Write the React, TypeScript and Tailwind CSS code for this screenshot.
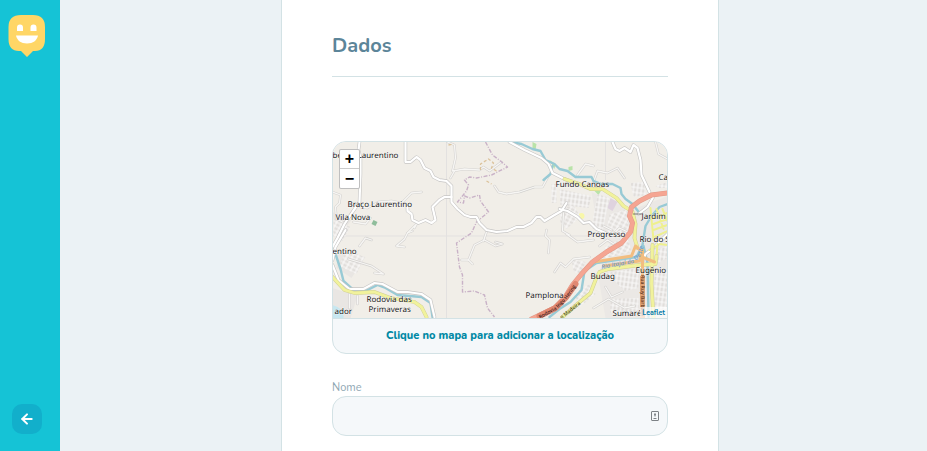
import { FiArrowLeft } from "react-icons/fi";

const whiteRoads = [
  "M360 142 L359 150 L361 158 L361 174 L360 202 L353 212 L345 224 L338 238 L333 247",
  "M406 142 L406 162 L411 162 L417 157 L421 160 L425 168 L431 171 L434 177 L440 180 L447 181 L452 186 L452 202 L458 209 L465 215 L471 217 L477 217 L480 223 L487 230 L497 232 L508 231 L517 227 L524 227 L532 223 L537 217 L541 217 L545 221 L555 215 L562 211 L567 203",
  "M408 207 L408 211 L412 214 L413 220 L419 223 L426 220 L432 223 L436 220 L433 207 L440 200 L445 197 L452 197",
  "M510 142 L525 150 L542 158 L549 164 L553 173 L563 178 L574 183",
  "M613 142 L616 149 L620 151 L625 148 L631 152 L634 145 L638 148 L641 160 L642 175 L650 192",
  "M333 265 L339 280 L350 289 L364 289 L375 283 L383 284 L398 292 L408 292 L422 294 L431 300 L435 317",
  "M346 230 L336 247 L333 260",
  "M560 209 L568 211 L578 217 L584 223 L590 222 L597 229 L606 233",
  "M641 267 L646 254 L655 247 L668 234",
  "M655 195 L648 207 L639 214",
];

const faintRoads = [
  "M422 192 L412 193 L402 203 L392 201 L379 202 L368 208 L361 207",
  "M448 142 L455 145 L456 158 L453 171 L465 169 L480 170 L484 167 L490 171 L502 162",
  "M455 171 L451 178",
  "M495 186 L499 192 L507 194 L520 192 L535 187 L543 187 L549 176",
  "M405 247 L397 246 L405 239 L408 233 L413 231",
  "M496 242 L503 244 L496 246 L485 240 L475 245 L469 260 L473 264",
  "M469 260 L462 260",
  "M484 241 L487 232",
  "M547 230 L546 236 L550 240 L549 253",
  "M555 272 L561 263 L566 267 L574 259 L590 257",
  "M349 259 L372 266 L384 274 L375 273",
  "M360 246 L366 238 L372 240",
  "M656 142 L659 154 L668 159",
  "M594 182 L598 171 L608 173 L618 168 L625 178",
  "M578 175 L586 164 L594 166",
  "M564 213 L563 231 L570 235",
  "M567 234 L578 242 L594 240",
  "M333 192 L341 195 L340 203 L336 207 L337 219 L345 223",
  "M408 233 L417 224 L415 228",
  "M594 308 L609 299 L625 308 L635 306",
  "M606 287 L612 297 L623 292",
  "M600 246 L608 240 L616 245 M612 236 L620 228 L628 232 M604 226 L612 230",
  "M354 222 L366 224 L371 218",
  "M350 294 L350 308 M358 296 L358 304",
];

const steepBlocks = [
  "M334 219 l17 8 l-8 14 l-9 -5 Z",
  "M347 250 l18 7 l-8 17 l-18 -8 Z",
  "M560 209 l14 -4 l7 12 l-14 12 l-6 -6 Z",
  "M572 259 l14 3 l-3 12 l-9 -2 Z",
  "M575 293 l15 -9 l6 10 l-17 14 Z",
  "M610 214 l18 -5 l1 24 l-13 5 l-9 -8 Z",
  "M606 246 l22 -10 l4 16 l-30 7 Z",
];

const uprightBlocks = [
  "M598 194 l12 4 l-7 34 l-11 -4 l3 -18 Z",
  "M560 189 l32 7 l-3 12 l-28 -3 Z",
  "M631 183 l13 -1 l3 13 l-13 2 Z",
  "M611 299 l28 -1 l0 15 l-28 0 Z",
  "M655 274 l13 -2 l0 37 l-13 0 Z",
  "M606 273 l33 -5 l0 20 l-14 3 l-10 -10 Z",
  "M552 184 l5 0 l0 19 l-5 0 Z",
  "M656 250 l12 -4 l0 12 l-12 6 Z",
  "M660 188 l8 0 l0 -6 l-12 4 Z",
];

const rivers = [
  "M512 142 L522 144 L533 149 L541 151 L546 160 L555 164 L560 169 L568 171 L576 177 L592 177 L594 181 L602 184 L613 184 L621 188 L622 194 L626 199 L633 204 L640 213",
  "M553 166 L551 174 L544 180",
  "M668 204 L660 207 L652 216 L646 226 L643 245 L637 257 L617 260 L597 263 L585 271 L582 290 L571 302 L560 309 L550 317",
  "M644 246 L648 263 L649 317",
  "M336 254 L341 269 L344 281 L355 291 L366 291 L378 285 L386 288 L398 295 L422 297 L431 303 L433 317",
];

const yellowRoads = [
  "M565 179 L580 184 L591 189 L603 189 L617 198 L624 206 L632 211",
  "M333 277 L345 290 L355 293 L375 292 L391 298 L415 302 L422 307 L427 317",
  "M563 317 L579 303 L591 293 L596 280 L600 272 L609 269 L640 265 L656 264 L657 256",
  "M653 245 L652 284 L654 317",
  "M633 212 L636 224 L635 238 L638 248",
];

const localYellow = [
  "M651 208 L654 240 M654 218 L668 213 M654 224 L668 219 M654 230 L668 225 M655 237 L668 231 M657 209 L664 229 M663 209 L668 221",
  "M650 250 L660 244 L668 245 M657 257 L658 244",
];

const mainRoad =
  "M668 193 L652 195 L640 201 L632 207 L630 216 L633 223 L631 232 L622 243 L607 252 L593 262 L582 274 L573 285 L565 298 L555 308 L532 319";

const places: [string, number, number][] = [
  ["be", 333, 158],
  ["Laurentino", 358, 158],
  ["Braço Laurentino", 348, 207],
  ["Vila Nova", 336, 220],
  ["Fundo Canoas", 556, 187],
  ["Ca", 659, 180],
  ["Jardim", 642, 219],
  ["Progresso", 588, 237],
  ["Rio do S", 640, 242],
  ["entino", 333, 254],
  ["Budag", 591, 279],
  ["Eugênio", 636, 273],
  ["Pamplona", 526, 298],
  ["Rodovia das", 367, 302],
  ["Primaveras", 369, 312],
  ["ador", 335, 314],
  ["Sumaré", 613, 316],
];

function Lines({ paths, color, width }: { paths: string[]; color: string; width: number }) {
  return (
    <g stroke={color} strokeWidth={width}>
      {paths.map((d) => (
        <path key={d} d={d} />
      ))}
    </g>
  );
}

function MapDrawing() {
  return (
    <svg
      viewBox="333 142 335 176"
      preserveAspectRatio="xMidYMid slice"
      className="block h-full w-full"
      role="img"
      aria-label="Mapa"
    >
      <defs>
        <pattern id="steep" width="5" height="4" patternUnits="userSpaceOnUse" patternTransform="rotate(28)">
          <rect width="5" height="4" fill="#e2dfdc" />
          <path d="M0 2H5M2 0V4" stroke="#fbfaf9" strokeWidth="1.2" />
        </pattern>
        <pattern id="upright" width="4" height="5" patternUnits="userSpaceOnUse" patternTransform="rotate(8)">
          <rect width="4" height="5" fill="#e1dedb" />
          <path d="M0 2H4M2 0V5" stroke="#fbfaf9" strokeWidth="1.2" />
        </pattern>
        <path id="rodovia" d="M540 318 L556 309 L567 298 L579 281" />
        <path id="madeira" d="M562 319 L570 313 L585 301" />
        <path id="rio" d="M602 267 L634 261 L640 254 L645 236" />
        <path id="ruy" d="M642 275 L642 317" />
      </defs>
      <rect x="333" y="142" width="335" height="176" fill="#f1eee8" />
      <path d="M592 192 L632 210 L668 196 V318 H606 L598 272 L618 248 L600 238Z" fill="#ebe8e5" />
      <path d="M333 212 L352 220 L337 240Z M338 250 L366 257 L352 278 L337 268Z M333 288 L358 296 L351 318 H333Z" fill="#e9e6e3" />
      <path d="M447 142V318M606 142V180M333 236H600" stroke="#e3e1e0" strokeWidth="1" />
      <path d="M333 305 q12 3 11 13 h-11z" fill="#c7e7f0" />
      <g fill="#b9e3a9">
        <path d="M374 220l4 2-2 4-4-2z" fill="#8fbd9b" />
        <path d="M533 142l4 2-1 6-3-2zM550 160l6 4-1 5zM569 167l4-1 0 4-4 1zM601 212l3 1-3 14-3-1zM593 189l9 1-3 5z" />
      </g>
      <circle cx="582" cy="216" r="3" fill="#f8f7a8" />
      <path d="M611 198l7 4-5 9-5-3z" fill="#dfd3df" />
      {steepBlocks.map((d) => (
        <path key={d} d={d} fill="url(#steep)" />
      ))}
      {uprightBlocks.map((d) => (
        <path key={d} d={d} fill="url(#upright)" />
      ))}
      <g fill="none" strokeLinejoin="round" strokeLinecap="round">
        <Lines paths={faintRoads} color="#d3d1cf" width={2.4} />
        <Lines paths={faintRoads} color="#f7f6f4" width={1.3} />
        <g stroke="#c9b2c7" strokeWidth="1.4" strokeDasharray="4 1.5 1 1.5" strokeLinecap="butt">
          <path d="M486 142 L493 155 L501 161 L508 167 L492 175 L477 178 L470 177 L465 180 L469 185 L467 191 L458 202 L464 203 L465 196 L470 198 L480 195 L481 201 L489 212 L477 222 L472 233 L457 243 L460 267 L463 275 L463 292 L475 291 L485 295 L488 308 L495 317" />
        </g>
        <path
          d="M481 170 L481 164 L489 159 L494 163 L492 168 L497 171 M487 181 L492 184 M449 145 L454 144"
          stroke="#dcc39c"
          strokeWidth="1.3"
          strokeDasharray="3 2"
          strokeLinecap="butt"
        />
        <Lines paths={rivers} color="#98cad5" width={2.4} />
        <Lines paths={whiteRoads} color="#c6c5c4" width={3.4} />
        <Lines paths={whiteRoads} color="#fff" width={2.2} />
        <Lines paths={localYellow} color="#eef08f" width={2} />
        <Lines paths={yellowRoads} color="#d0cf94" width={3.8} />
        <Lines paths={yellowRoads} color="#f1f29c" width={2.8} />
        <path
          d="M594 262 L632 256 L636 246 L643 252 M604 266 L640 261 L643 252 M640 256 L655 262 M643 250 V318"
          stroke="#f2bd80"
          strokeWidth="3"
        />
        <path d="M643 276 V318" stroke="#dfa375" strokeWidth="5" strokeLinecap="butt" />
        <path d={mainRoad} stroke="#e09a89" strokeWidth="5" />
        <path d={mainRoad} stroke="#f5a592" strokeWidth="4" />
        <path d="M540 316 L556 308 L566 298 L576 284" stroke="#e08872" strokeWidth="6" />
        <path d="M634 214H643" stroke="#555" strokeWidth=".8" />
      </g>
      <g fontFamily="'Open Sans', 'Noto Sans', sans-serif" fontWeight="600" textRendering="geometricPrecision">
        <text fontSize="5" fill="#3f211d" dy="1">
          <textPath href="#rodovia">Rodovia Ingo Hering</textPath>
        </text>
        <text fontSize="5" fill="#4a4a28">
          <textPath href="#madeira">o Madeira</textPath>
        </text>
        <text fontSize="6" fill="#6c9fd0" fontStyle="italic" dy="2">
          <textPath href="#rio">Rio Itajaí do Oeste</textPath>
        </text>
        <text fontSize="5" fill="#5b3420" dy="1">
          <textPath href="#ruy">Rua Ruy Barbosa</textPath>
        </text>
      </g>
      <g
        fontFamily="'Noto Sans', 'Open Sans', sans-serif"
        fontSize="8"
        fill="#222"
        stroke="#fff"
        strokeOpacity="0.5"
        strokeWidth="1"
        paintOrder="stroke"
        textRendering="geometricPrecision"
      >
        {places.map(([name, x, y]) => (
          <text key={name} x={x} y={y}>
            {name}
          </text>
        ))}
      </g>
    </svg>
  );
}

function SmileyPin() {
  return (
    <svg viewBox="0 0 38 44" className="h-11 w-[38px]" role="img" aria-label="Happy">
      <path
        d="M13 1H25Q37 1 37 13V25Q37 37 27 37H25L19 43L13 37H11Q.5 37 .5 25V13Q.5 1 13 1Z"
        fill="#ffd666"
      />
      <path d="M9 17V13.500a3 3 0 0 1 6 0V17ZM22.500 17V13.500a3 3 0 0 1 6 0V17Z" fill="#fff" />
      <path d="M8 21.500H30C29 26.500 25 29.500 19 29.500S9 26.500 8 21.500Z" fill="#fff" />
    </svg>
  );
}

export default function App() {
  return (
    <div className="flex min-h-screen bg-[#ebf2f5] font-['Nunito','Open_Sans','Noto_Sans',sans-serif]">
      <aside className="sticky top-0 flex h-screen w-[60px] shrink-0 flex-col items-center justify-between bg-[#15c3d6] pt-[14px] pr-[6px] pb-[17px]">
        <SmileyPin />
        <button
          type="button"
          aria-label="Voltar"
          className="flex size-[30px] items-center justify-center rounded-[10px] bg-[#12afcb] text-white"
        >
          <FiArrowLeft size={16} strokeWidth={3} />
        </button>
      </aside>

      <main className="flex flex-1 justify-center pl-[13px]">
        <form className="w-full max-w-[438px] border-x border-[#d3e2e5] bg-white px-[50px] pt-[30px] pb-3">
          <h1 className="border-b border-[#d3e2e5] pb-[14px] text-[20px] leading-8 font-bold text-[#5c8599]">
            Dados
          </h1>

          <div className="mt-16 overflow-hidden rounded-[14px] border border-[#d3e2e5] bg-[#f5f8fa]">
            <div className="relative h-44">
              <MapDrawing />
              <div className="absolute top-[7px] left-[6px] flex flex-col divide-y divide-[#ccc] overflow-hidden rounded-xs border border-black/25 bg-white font-['Liberation_Sans',sans-serif] text-black">
                <button type="button" aria-label="Aproximar" className="flex h-[19px] w-[19px] items-center justify-center text-[16px] leading-none font-bold">
                  +
                </button>
                <button type="button" aria-label="Afastar" className="flex h-[19px] w-[19px] items-center justify-center text-[16px] leading-none font-bold">
                  −
                </button>
              </div>
              <a
                href="#leaflet"
                className="absolute right-0 bottom-0 bg-white/70 px-[2px] text-[7px] leading-[11px] font-bold text-[#0078a8]"
              >
                Leaflet
              </a>
            </div>
            <p className="border-t border-[#d3e2e5] text-center text-[11px] leading-[34px] font-extrabold text-[#0089a5]">
              Clique no mapa para adicionar a localização
            </p>
          </div>

          <label htmlFor="nome" className="mt-[26px] block text-[11px] leading-4 text-[#8fa7b3]">
            Nome
          </label>
          <div className="relative">
            <input
              id="nome"
              type="text"
              className="block h-10 w-full rounded-[14px] border border-[#d3e2e5] bg-[#f5f8fa] pr-8 pl-4 text-[12px] text-[#5c8599] outline-none"
            />
            <svg viewBox="0 0 8 10" className="absolute top-[15px] right-[9px] h-[10px] w-2" fill="none" aria-hidden="true">
              <rect x=".5" y=".5" width="7" height="9" rx=".5" stroke="#7d8286" />
              <path d="M4 2.500V5.500M2.500 7.500H5.500" stroke="#7d8286" />
              <circle cx="4" cy="3.500" r="1" fill="#7d8286" />
            </svg>
          </div>
        </form>
      </main>
    </div>
  );
}
